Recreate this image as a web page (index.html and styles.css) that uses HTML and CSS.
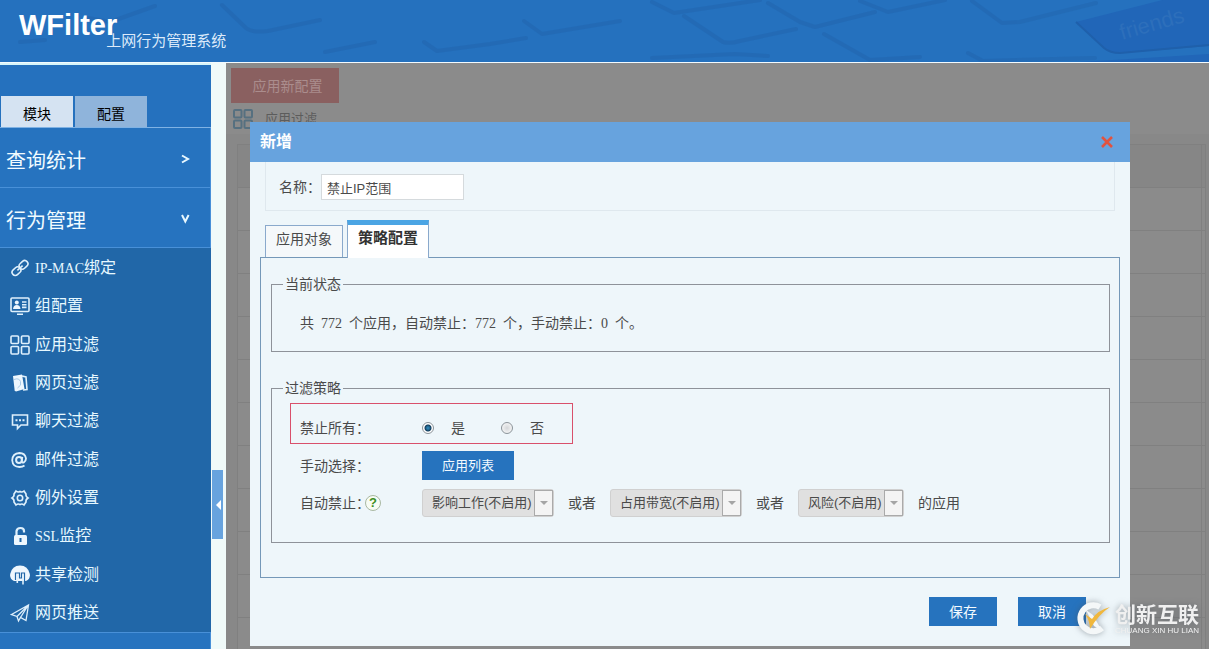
FILE: index.html
```html
<!DOCTYPE html>
<html lang="zh-CN">
<head>
<meta charset="utf-8">
<title>WFilter 上网行为管理系统</title>
<link rel="stylesheet" href="styles.css">
</head>
<body>
<header class="banner">
  <svg class="banner-art" viewBox="0 0 1209 62" preserveAspectRatio="xMinYMin slice" aria-hidden="true">
    <g fill="none" stroke="#2265ae" stroke-width="4" stroke-linejoin="round" stroke-linecap="round" opacity=".5">
      <path d="M88 18L110 22L155 6M20 42L45 40"/>
      <path d="M222 5L246 28Q252 33 268 31L320 20M325 52L375 42"/>
      <path d="M424 42L437 51L490 44L526 38"/>
      <path d="M524 21L542 34L620 21"/>
      <path d="M652 2L674 13L760 0M684 16L723 42Q730 44 740 41L796 29M768 3L800 22L815 27L875 12M652 58L735 54L768 56"/>
      <path d="M860 1L888 12L945 0M824 34L870 60L920 57"/>
      <path d="M972 1L1002 23L1020 22L1096 3M968 53L983 61L1095 58"/>
    </g>
    <path d="M1076 22L1178 -4H1209V46L1120 53Q1110 53 1104 48Z" fill="#2166b8"/>
    <path d="M1076 22L1104 48Q1110 53 1120 53L1209 45" fill="none" stroke="#1f60ab" stroke-width="2"/>
    <path d="M1080 62L1209 54V62Z" fill="#2166b8"/>
    <text class="keycap" x="1122" y="40" transform="rotate(-16 1122 40)">friends</text>
  </svg>
  <div class="brand"><strong class="brand-name">WFilter</strong><span class="brand-sub">上网行为管理系统</span></div>
</header>

<div class="shell">
  <aside class="sidebar">
    <div class="side-tabs">
      <button class="side-tab active" type="button">模块</button>
      <button class="side-tab" type="button">配置</button>
    </div>
    <button class="section" type="button"><span>查询统计</span>
      <svg width="10" height="10" viewBox="0 0 10 10"><path d="M2 1.5L8 5L2 8.5" class="chev"/></svg></button>
    <button class="section" type="button"><span>行为管理</span>
      <svg width="10" height="10" viewBox="0 0 10 10"><path d="M2 1L5.3 7.5L8.6 1" class="chev"/></svg></button>
    <nav class="menu">
      <a href="#ipmac"><svg class="icon" viewBox="0 0 20 20"><g transform="rotate(-42 10 10)"><rect x="0.5" y="6.8" width="9.5" height="6.4" rx="3.2"/><rect x="10" y="6.8" width="9.5" height="6.4" rx="3.2"/><path d="M6.5 10H13.5"/></g></svg><span><span class="half">IP-MAC</span>绑定</span></a>
      <a href="#group"><svg class="icon" viewBox="0 0 20 20"><rect x="1" y="2" width="18" height="13.5" rx="1"/><path d="M7 18.2H13M12 6H16.5M12 8.7H16.5M12 11.4H16.5"/><circle class="solid" cx="6.8" cy="6.5" r="2"/><path class="solid" d="M3 13Q3.5 9 6.8 9T10.5 13Z"/></svg><span>组配置</span></a>
      <a href="#app"><svg class="icon" viewBox="0 0 20 20"><rect x="1" y="1" width="7.5" height="7.5" rx="1"/><rect x="11.5" y="1" width="7.5" height="7.5" rx="1"/><rect x="1" y="11.5" width="7.5" height="7.5" rx="1"/><rect x="11.5" y="11.5" width="7.5" height="7.5" rx="1"/></svg><span>应用过滤</span></a>
      <a href="#web"><svg class="icon" viewBox="0 0 20 20"><path d="M12 3L16 4L17 16.5L13 17"/><path class="solid" d="M3 3L12 1.5L14.5 16L6 18.5Q4 18 4.5 16Z"/><path d="M4 6.500Q9 4.500 10.500 8.500T7.500 15" stroke="#a9c9e6" stroke-width="1"/></svg><span>网页过滤</span></a>
      <a href="#chat"><svg class="icon" viewBox="0 0 20 20"><path d="M2.5 4H17.5V14H11L7.5 17.5V14H2.5Z"/><path d="M5.5 9.2H7.5M9 9.2H11M12.5 9.2H14.5" stroke-width="2"/></svg><span>聊天过滤</span></a>
      <a href="#mail"><svg class="icon" viewBox="0 0 20 20"><circle cx="9" cy="10" r="2.9" stroke-width="2"/><path d="M12.3 6.8L11.7 11.2Q12 13 13.8 12.4Q16 11 16 8.4Q15 3 9.5 3Q2.500 3.500 2.200 10.300Q2.700 17 9.500 17Q12.500 17 14.500 15.500" stroke-width="1.8"/></svg><span>邮件过滤</span></a>
      <a href="#except"><svg class="icon" viewBox="0 0 20 20"><path d="M6 3Q8 4.800 10 3.500Q12 4.800 14 3L16 6Q15.500 8.500 18 10Q15.500 11.500 16 14L14 17Q12 15.200 10 16.500Q8 15.200 6 17L4 14Q4.500 11.500 2 10Q4.500 8.500 4 6Z"/><circle cx="10" cy="10" r="2.7"/></svg><span>例外设置</span></a>
      <a href="#ssl"><svg class="icon" viewBox="0 0 20 20"><path d="M6.500 10V5Q7 2 10.500 2T14 5V6.500" stroke-width="2.200"/><rect class="solid" x="4" y="9" width="13" height="10" rx="1.5"/><path d="M10.500 12V16" stroke="#2167a8" stroke-width="2"/></svg><span><span class="half">SSL</span>监控</span></a>
      <a href="#share"><svg class="icon" viewBox="0 0 20 20"><path class="solid" d="M4 16Q-0.500 14 0.200 9Q2 0.500 10 0.500T19.800 9Q20.500 14 16 16Z"/><path d="M5.500 15V8H9.500V13H11.500V8H14.500V17" stroke="#2167a8" stroke-width="1.200"/><path d="M7.300 18V10M13 19.500V10"/></svg><span>共享检测</span></a>
      <a href="#push"><svg class="icon" viewBox="0 0 20 20"><path d="M1.5 11.5L18.5 2L16 17.5L10.5 14.5L8.5 18L7 13.5ZM7 13.5L18 2.5L10.5 14.5" stroke-width="1.3"/></svg><span>网页推送</span></a>
    </nav>
    <div class="section-next"></div>
  </aside>

  <div class="rail">
    <button class="rail-handle" type="button" aria-label="收起菜单"></button>
  </div>

  <main class="page">
    <button class="apply" type="button">应用新配置</button>
    <div class="page-title">
      <svg class="icon" viewBox="0 0 20 20"><rect x="1" y="1" width="7.5" height="7.5" rx="1"/><rect x="11.5" y="1" width="7.5" height="7.5" rx="1"/><rect x="1" y="11.5" width="7.5" height="7.5" rx="1"/><rect x="11.5" y="11.5" width="7.5" height="7.5" rx="1"/></svg>
      <span>应用过滤</span>
    </div>
    <div class="table-wrap">
      <table class="grid">
        <tr><th></th><th class="edge"></th></tr>
        <tr><td></td><td></td></tr><tr><td></td><td></td></tr><tr><td></td><td></td></tr>
        <tr><td></td><td></td></tr><tr><td></td><td></td></tr><tr><td></td><td></td></tr>
        <tr><td></td><td></td></tr><tr><td></td><td></td></tr><tr><td></td><td></td></tr>
        <tr><td></td><td></td></tr><tr><td></td><td></td></tr>
      </table>
    </div>

    <div class="overlay">
      <form class="dialog" role="dialog" aria-labelledby="dlg-title">
        <div class="dialog-head">
          <h2 id="dlg-title">新增</h2>
          <button class="close" type="button" aria-label="关闭"><svg width="14" height="14" viewBox="0 0 14 14"><path d="M2 2L12 12M12 2L2 12" stroke="#e2533f" stroke-width="2.6"/></svg></button>
        </div>
        <div class="dialog-body">
          <div class="name-box"><label for="name">名称：</label><input id="name" class="text" type="text" value="禁止IP范围"></div>
          <div class="tabs">
            <button class="tab" type="button">应用对象</button>
            <button class="tab current" type="button">策略配置</button>
          </div>
          <div class="panel">
            <fieldset class="status">
              <legend>当前状态</legend>
              <p>共<span class="num first">772</span>个应用，自动禁止：<span class="num">772</span>个，手动禁止：<span class="num">0</span>个。</p>
            </fieldset>
            <fieldset class="policy">
              <legend>过滤策略</legend>
              <div class="row marked">
                <span class="caption">禁止所有：</span>
                <label class="choice"><input type="radio" name="all" checked>是</label>
                <label class="choice"><input type="radio" name="all">否</label>
              </div>
              <div class="row manual">
                <span class="caption">手动选择：</span>
                <button class="btn list" type="button">应用列表</button>
              </div>
              <div class="row auto">
                <span class="caption">自动禁止：<button class="help" type="button">?</button></span>
                <span class="drop"><select aria-label="影响工作"><option>影响工作(不启用)</option></select></span>
                <span>或者</span>
                <span class="drop"><select aria-label="占用带宽"><option>占用带宽(不启用)</option></select></span>
                <span>或者</span>
                <span class="drop"><select aria-label="风险"><option>风险(不启用)</option></select></span>
                <span>的应用</span>
              </div>
            </fieldset>
          </div>
          <div class="actions">
            <button class="btn" type="button">保存</button>
            <button class="btn" type="button">取消</button>
          </div>
        </div>
      </form>
    </div>
  </main>
</div>

<div class="watermark">
  <svg width="38" height="36" viewBox="0 0 38 36" aria-hidden="true">
    <path d="M25 6A13 13 0 1 0 27 27" fill="none" stroke="#f4f7f8" stroke-width="6"/>
    <path d="M11 9L18 14L27 30L19 25Z" fill="#f4f7f8"/>
    <path d="M10 13L17 18Q23 9 35 6Q24 13 15 28Q15 20 10 13Z" fill="#f0b73c"/>
  </svg>
  <div class="mark-text"><b>创新互联</b><span>CHUANG XIN HU LIAN</span></div>
</div>
</body>
</html>
```
FILE: styles.css
```css
* { box-sizing: border-box; }
body {
  margin: 0;
  height: 100vh;
  display: flex;
  flex-direction: column;
  overflow: hidden;
  font: 14px/20px "Liberation Sans", "Noto Sans CJK SC", sans-serif;
  color: #4a4a4a;
}
button, input, select { font: inherit; color: inherit; margin: 0; padding: 0; border: 0; border-radius: 0; }
button { cursor: pointer; }

/* banner */
.banner {
  position: relative;
  flex: none;
  height: 63px;
  background: #2571be;
  border-bottom: 1px solid #f3fbff;
  overflow: hidden;
}
.banner-art { position: absolute; inset: 0; width: 100%; height: 62px; }
.keycap { font: 22px "Liberation Sans", sans-serif; fill: #2d6fbb; }
.brand { position: relative; display: flex; align-items: flex-start; padding: 9px 0 0 19px; color: #fff; }
.brand-name { font-size: 29px; line-height: 32px; font-weight: 700; }
.brand-sub { margin: 22px 0 0 -11px; font-size: 15px; line-height: 20px; color: #dceafa; }

.shell { flex: 1; min-height: 0; display: flex; }

/* sidebar */
.sidebar {
  width: 211px;
  display: flex;
  flex-direction: column;
  background: #2571be;
  border-top: 2px solid #d8f5fa;
}
.side-tabs { display: flex; gap: 2px; padding: 31px 0 0 1px; border-bottom: 1px solid #7fb2e4; }
.side-tab { width: 72px; height: 31px; padding-top: 4px; background: #8fb4db; color: #000; }
.side-tab.active { background: #d5e3f2; }
.section {
  display: flex;
  align-items: center;
  justify-content: space-between;
  height: 60px;
  padding: 6px 20px 0 6px;
  background: #2673bf;
  border-bottom: 1px solid #4890d8;
  border-right: 1px solid #4890d8;
  color: #f0fbff;
  font-size: 20px;
}
.section svg { margin-bottom: 4px; }
.chev { fill: none; stroke: #e8f8ff; stroke-width: 2; }
.menu { flex: 1; display: flex; flex-direction: column; padding-top: 1px; background: #2167a8; }
.menu a {
  flex: 1;
  display: flex;
  align-items: center;
  gap: 5px;
  padding-left: 10px;
  color: #e6f8ff;
  font-size: 16px;
  text-decoration: none;
}
.half { font-family: "Liberation Serif", serif; font-size: 14px; }
.icon { width: 20px; height: 20px; flex: none; fill: none; stroke: #dff0fc; stroke-width: 1.6; }
.icon .solid { fill: #eef7fe; stroke: none; }
.section-next { height: 17px; background: #2673bf; border-top: 1px solid #4890d8; border-right: 1px solid #4890d8; }

.rail { width: 15px; padding: 407px 0 0 1px; background: #f0faf9; }
.rail-handle { display: flex; align-items: center; justify-content: flex-end; width: 11px; height: 69px; padding-right: 2px; background: #67a3de; }
.rail-handle::before { content: ""; border: 5px solid transparent; border-left: 0; border-right-color: #fff; }

/* dimmed page */
.page { position: relative; flex: 1; min-width: 0; overflow: hidden; background: #8b8b8b; color: #5c5c5c; }
.apply { display: block; width: 108px; height: 35px; margin: 5px 0 0 5px; padding-left: 5px; background: #8a6060; color: #ab8d8d; }
.page-title { display: flex; align-items: center; gap: 12px; height: 31px; padding-left: 7px; font-size: 13px; }
.page-title .icon { stroke: #567080; stroke-width: 2; }
.table-wrap { padding: 10px 3px 0 11px; background: #888; }
.grid { width: 100%; border-collapse: collapse; background: #8b8b8b; }
.grid th, .grid td { height: 43px; padding: 0; border: 1px solid #808080; }
.grid th { background: #868686; }
.grid .edge { width: 4px; }

/* dialog */
.overlay { position: absolute; inset: 0; padding: 59px 79px 0 24px; }
.dialog { color: #4a4a4a; background: #eef6fa; }
.dialog-head { display: flex; align-items: center; justify-content: space-between; height: 40px; padding: 0 16px 0 10px; background: #67a3de; }
.dialog-head h2 { margin: 0; font-size: 16px; color: #fff; }
.close { display: flex; background: none; }
.dialog-body { padding: 0 10px 20px; }
.name-box { display: flex; align-items: center; margin: 0 5px; height: 49px; padding: 2px 0 0 13px; border: 1px solid #dfe8ee; border-top: 0; }
.text { width: 143px; height: 26px; padding: 0 5px; border: 1px solid #d5dadd; background: #fff; font-size: 13px; }
.tabs { display: flex; align-items: flex-end; gap: 4px; padding: 9px 5px 0; }
.tab { width: 78px; height: 32px; padding-bottom: 6px; background: #f5f8fa; border: 1px solid #8aa9cc; border-bottom: 0; }
.tab.current { width: 82px; height: 38px; padding-bottom: 8px; margin-bottom: -1px; border-top: 5px solid #4ba5e4; background: #fff; font-size: 15px; font-weight: 700; color: #333; z-index: 1; }
.panel { padding: 16px 9px 34px 10px; border: 1px solid #7598b8; }
fieldset { margin: 0; border: 1px solid #8e9299; min-width: 0; }
legend { padding: 0 2px; }
.status { padding: 19px 11px 17px; margin-bottom: 26px; }
.status p { margin: 0; padding-left: 17px; }
.num { padding-right: 7px; font-family: "Liberation Serif", serif; }
.num.first { padding-left: 7px; }
.policy { padding: 5px 11px 25px; }
.row { display: flex; align-items: center; padding-left: 17px; }
.caption { display: flex; flex: none; align-items: center; width: 122px; }
.marked { width: 283px; height: 41px; margin-left: 7px; padding: 9px 0 0 9px; border: 1px solid #d9506b; }
.choice { display: flex; flex: none; align-items: center; gap: 17px; width: 79px; }
.choice input {
  appearance: none;
  width: 12px;
  height: 12px;
  border: 1px solid #8b9399;
  border-radius: 50%;
  background: radial-gradient(circle, #d4d6d8, #fff);
}
.choice input:checked { background: radial-gradient(circle, #2b7fae 0 1px, #133d5c 3px, #fff 4px); }
.manual { margin-top: 7px; }
.auto { margin-top: 9px; gap: 14px; }
.auto .caption { margin-right: -14px; }
.btn { width: 68px; height: 29px; background: #2673be; color: #f3faff; }
.btn.list { width: 92px; font-size: 13px; }
.help {
  width: 16px;
  height: 16px;
  margin-left: -5px;
  border: 1px solid #a9b8a2;
  border-radius: 50%;
  background: #f7fcf4;
  color: #3d8f22;
  font-size: 13px;
  line-height: 14px;
  font-weight: 700;
}
.drop { position: relative; display: flex; }
.drop select {
  appearance: none;
  height: 28px;
  padding: 0 21px 0 9px;
  border: 1px solid #d0d0d0;
  border-radius: 3px;
  background: #e0e0e0;
  font-size: 13px;
}
.drop::before { content: ""; position: absolute; inset: 1px 1px 1px auto; width: 17px; border: 1px solid #aaa; background: #f4f4f4; pointer-events: none; }
.drop::after { content: ""; position: absolute; right: 6px; top: 12px; border: 4px solid transparent; border-top-color: #a5a5a5; border-bottom: 0; pointer-events: none; }
.actions { display: flex; justify-content: flex-end; gap: 21px; padding: 19px 34px 0 0; }

.watermark { position: fixed; right: 10px; bottom: 12px; display: flex; align-items: center; gap: 2px; color: #f0f0f0; filter: drop-shadow(0 0 3px rgba(70, 80, 90, .5)); }
.mark-text { display: flex; flex-direction: column; }
.mark-text b { font-size: 21px; line-height: 24px; font-weight: 700; }
.mark-text span { font-size: 8px; line-height: 8px; white-space: nowrap; }
```
